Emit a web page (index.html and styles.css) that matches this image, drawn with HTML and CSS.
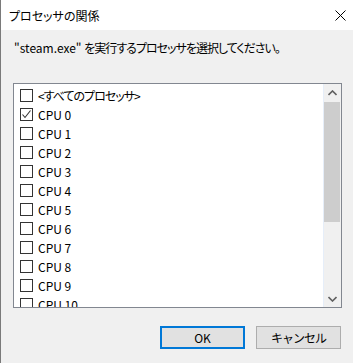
FILE: index.html
```html
<!DOCTYPE html>
<html lang="ja">
<head>
    <meta charset="UTF-8">
    <title>プロセッサの関係</title>
    <link rel="stylesheet" href="styles.css">
</head>
<body>
<div class="window">
    <div class="titlebar">
        <span class="title">プロセッサの関係</span>
        <span class="close">
            <svg width="11" height="11" viewBox="0 0 11 11"><path d="M0.5 0.5 L10.5 10.5 M10.5 0.5 L0.5 10.5" stroke="#000" stroke-width="1" fill="none"/></svg>
        </span>
    </div>

    <p class="prompt">"steam.exe" <span class="jp">を実行するプロセッサを選択してください。</span></p>

    <!-- processor list -->
    <div class="listbox">
        <div class="items">
            <div class="item"><span class="box"></span><span class="jp">&lt;すべてのプロセッサ&gt;</span></div>
            <div class="item"><span class="box checked"><svg width="11" height="11" viewBox="0 0 11 11"><path d="M1.5 5.5 L4 8.5 L9.5 1.5" stroke="#333" stroke-width="1.1" fill="none"/></svg></span>CPU 0</div>
            <div class="item"><span class="box"></span>CPU 1</div>
            <div class="item"><span class="box"></span>CPU 2</div>
            <div class="item"><span class="box"></span>CPU 3</div>
            <div class="item"><span class="box"></span>CPU 4</div>
            <div class="item"><span class="box"></span>CPU 5</div>
            <div class="item"><span class="box"></span>CPU 6</div>
            <div class="item"><span class="box"></span>CPU 7</div>
            <div class="item"><span class="box"></span>CPU 8</div>
            <div class="item"><span class="box"></span>CPU 9</div>
            <div class="item"><span class="box"></span>CPU 10</div>
        </div>
        <div class="scrollbar">
            <span class="arrow"><svg width="9" height="6" viewBox="0 0 9 6"><path d="M0.5 5 L4.5 1 L8.5 5" stroke="#606060" stroke-width="1.6" fill="none"/></svg></span>
            <div class="track"><div class="thumb"></div></div>
            <span class="arrow"><svg width="9" height="6" viewBox="0 0 9 6"><path d="M0.5 1 L4.5 5 L8.5 1" stroke="#606060" stroke-width="1.6" fill="none"/></svg></span>
        </div>
    </div>

    <div class="buttons">
        <button class="btn default">OK</button>
        <button class="btn"><span class="jp">キャンセル</span></button>
    </div>
</div>
</body>
</html>
```

FILE: styles.css
```css
body {
    margin: 0;
    font-family: "Noto Sans CJK JP", "Noto Sans", sans-serif;
    font-feature-settings: "palt";
    font-size: 12px;
    color: #000;
}
.jp {
    letter-spacing: -1px;
}
.window {
    width: 353px;
    height: 363px;
    box-sizing: border-box;
    border-left: 1px solid #7a7a7a;
    background-color: #f0f0f0;
    overflow: hidden;
}
.titlebar {
    height: 30px;
    background-color: #fff;
    display: flex;
    align-items: center;
    justify-content: space-between;
    padding-left: 8px;
    padding-right: 7px;
}
.close {
    display: flex;
}
.prompt {
    margin: 10px 0 0 13px;
    line-height: 16px;
}
.listbox {
    margin: 27px 0 0 12px;
    width: 329px;
    height: 225px;
    box-sizing: border-box;
    border: 1px solid #828790;
    background-color: #fff;
    display: flex;
    overflow: hidden;
}
.items {
    flex: 1;
    padding-top: 2px;
    padding-left: 6px;
    border-right: 1px solid #e6eef9;
}
.item {
    height: 19px;
    display: flex;
    align-items: center;
}
.box {
    width: 13px;
    height: 13px;
    box-sizing: border-box;
    border: 1px solid #333;
    margin-right: 5px;
    display: flex;
    align-items: center;
    justify-content: center;
    flex-shrink: 0;
}
.scrollbar {
    width: 17px;
    background-color: #f0f0f0;
    display: flex;
    flex-direction: column;
}
.arrow {
    height: 17px;
    display: flex;
    align-items: center;
    justify-content: center;
}
.track {
    flex: 1;
}
.thumb {
    margin: 1px 1px 0 0;
    height: 120px;
    background-color: #cdcdcd;
}
.buttons {
    display: flex;
    justify-content: flex-end;
    gap: 11px;
    margin: 18px 12px 0 0;
}
.btn {
    width: 85px;
    height: 23px;
    font-family: inherit;
    font-size: 12px;
    background-color: #e1e1e1;
    border: 1px solid #adadad;
    padding: 0;
    color: #000;
}
.default {
    border: 2px solid #0078d7;
}
```
